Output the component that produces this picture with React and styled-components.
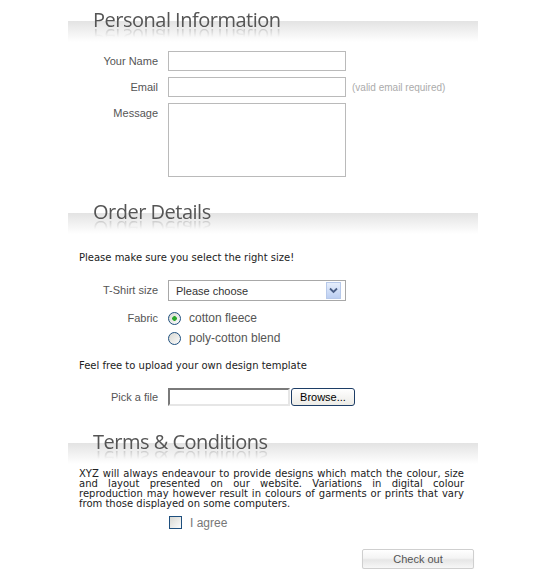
import styled, { createGlobalStyle } from "styled-components"

const GlobalStyle = createGlobalStyle`
    body {
        margin: 0;
        background: #fff;
        font-family: "Liberation Sans", Arial, sans-serif;
    }
`

export default function App() {
    return (
        <>
            <GlobalStyle />
            <Page>
                <SectionHeader>
                    <Title>Personal Information</Title>
                </SectionHeader>

                <FormRow $top={9}>
                    <Label>Your Name</Label>
                    <TextInput type="text" />
                </FormRow>
                <FormRow $top={6}>
                    <Label>Email</Label>
                    <Field>
                        <TextInput type="text" />
                        <Hint>(valid email required)</Hint>
                    </Field>
                </FormRow>
                <FormRow $top={6}>
                    <Label>Message</Label>
                    <TextArea />
                </FormRow>

                <SectionHeader $top={15}>
                    <Title>Order Details</Title>
                </SectionHeader>

                <Note $top={18}>Please make sure you select the right size!</Note>

                <FormRow $top={16}>
                    <Label $height={21}>T-Shirt size</Label>
                    <SelectWrap>
                        <Select defaultValue="">
                            <option value="">Please choose</option>
                            <option value="s">Small</option>
                            <option value="m">Medium</option>
                            <option value="l">Large</option>
                        </Select>
                        <SelectArrow>
                            <svg width="9" height="7" viewBox="0 0 9 7">
                                <path d="M1 1.5 L4.5 5 L8 1.5" fill="none" stroke="#4a5f86" strokeWidth="1.8" />
                            </svg>
                        </SelectArrow>
                    </SelectWrap>
                </FormRow>

                <FormRow $top={7}>
                    <Label>Fabric</Label>
                    <Options>
                        <Option>
                            <Radio type="radio" name="fabric" defaultChecked />
                            cotton fleece
                        </Option>
                        <Option>
                            <Radio type="radio" name="fabric" />
                            poly-cotton blend
                        </Option>
                    </Options>
                </FormRow>

                <Note $top={12}>Feel free to upload your own design template</Note>

                <FormRow $top={16}>
                    <Label $height={18}>Pick a file</Label>
                    <Field $gap={1}>
                        <FileBox type="text" readOnly />
                        <BrowseButton type="button">Browse...</BrowseButton>
                    </Field>
                </FormRow>

                <SectionHeader $top={16}>
                    <Title>Terms &amp; Conditions</Title>
                </SectionHeader>

                <Terms>
                    XYZ will always endeavour to provide designs which match the colour, size
                    and layout presented on our website. Variations in digital colour
                    reproduction may however result in colours of garments or prints that vary
                    from those displayed on some computers.
                </Terms>

                <FormRow $top={7}>
                    <span />
                    <Option $height={13}>
                        <Checkbox type="checkbox" />
                        <AgreeText>I agree</AgreeText>
                    </Option>
                </FormRow>

                <Actions>
                    <CheckoutButton type="button">Check out</CheckoutButton>
                </Actions>
            </Page>
        </>
    )
}

const Page = styled.div`
    width: 410px;
    margin-left: 68px;
`

const SectionHeader = styled.div`
    box-sizing: border-box;
    height: 42px;
    margin-top: ${props => props.$top || 0}px;
    padding: 8px 0 0 25px;
    background: linear-gradient(to bottom, transparent 21px, #e3e3e3 21px, #fff 42px);
`

const Title = styled.h2`
    display: inline-block;
    margin: 0;
    font-family: "Open Sans", sans-serif;
    font-size: 20px;
    font-weight: 400;
    line-height: 24px;
    letter-spacing: -0.5px;
    color: #555;
    -webkit-box-reflect: below -8px linear-gradient(to bottom, transparent 45%, rgba(0, 0, 0, 0.35));
`

const FormRow = styled.div`
    display: grid;
    grid-template-columns: 90px 1fr;
    column-gap: 10px;
    margin-top: ${props => props.$top || 0}px;
`

const Label = styled.label`
    font-size: 11px;
    line-height: ${props => props.$height || 20}px;
    text-align: right;
    color: #555;
`

const Field = styled.div`
    display: flex;
    align-items: center;
    gap: ${props => props.$gap ?? 6}px;
`

const TextInput = styled.input`
    box-sizing: border-box;
    width: 178px;
    height: 20px;
    margin: 0;
    padding: 2px 4px;
    border: 1px solid #bababa;
    font-size: 11px;
    font-family: inherit;
    outline: none;
`

const TextArea = styled.textarea`
    box-sizing: border-box;
    display: block;
    width: 178px;
    height: 74px;
    margin: 0;
    padding: 2px 4px;
    border: 1px solid #bababa;
    resize: none;
    font-size: 11px;
    font-family: inherit;
    outline: none;
`

const Hint = styled.span`
    font-size: 10px;
    color: #ababab;
`

const Note = styled.p`
    margin: ${props => props.$top || 0}px 0 0;
    padding-left: 11px;
    font-family: "DejaVu Sans", Verdana, sans-serif;
    font-size: 10px;
    line-height: 12px;
    color: #222;
`

const SelectWrap = styled.div`
    position: relative;
    width: 178px;
    height: 21px;
`

const Select = styled.select`
    box-sizing: border-box;
    width: 100%;
    height: 100%;
    margin: 0;
    padding: 0 0 0 7px;
    border: 1px solid #a8a8a8;
    background: #fff;
    appearance: none;
    font-family: inherit;
    font-size: 11px;
    color: #333;
    outline: none;
`

const SelectArrow = styled.span`
    position: absolute;
    top: 2px;
    right: 5px;
    box-sizing: border-box;
    width: 15px;
    height: 17px;
    display: flex;
    align-items: center;
    justify-content: center;
    border: 1px solid #b7c9ea;
    background: linear-gradient(to bottom, #e6eefc, #bccff2);
    pointer-events: none;
`

const Options = styled.div`
    display: flex;
    flex-direction: column;
`

const Option = styled.label`
    display: flex;
    align-items: center;
    gap: 8px;
    height: ${props => props.$height || 20}px;
    font-size: 12px;
    color: #555;
`

const Radio = styled.input`
    appearance: none;
    box-sizing: border-box;
    width: 13px;
    height: 13px;
    margin: 0;
    border: 1px solid #1e4f7e;
    border-radius: 50%;
    background: linear-gradient(135deg, #d8d8d2, #fbfbfb);

    &:checked {
        background:
            radial-gradient(circle, #2aa72a 0 2px, transparent 2.6px),
            linear-gradient(135deg, #d8d8d2, #fbfbfb);
    }
`

const Checkbox = styled.input`
    appearance: none;
    box-sizing: border-box;
    width: 13px;
    height: 13px;
    margin: 0 0 0 1px;
    border: 1px solid #1e4f7e;
    background: linear-gradient(135deg, #d8d8d2, #fbfbfb);
`

const AgreeText = styled.span`
    color: #777;
`

const FileBox = styled.input`
    box-sizing: border-box;
    width: 122px;
    height: 18px;
    margin: 0;
    border: 2px solid;
    border-color: #7a7a7a #e6e6e6 #e6e6e6 #7a7a7a;
    outline: none;
`

const BrowseButton = styled.button`
    box-sizing: border-box;
    width: 64px;
    height: 18px;
    margin: 0;
    padding: 0;
    border: 1px solid #1d3d66;
    border-radius: 3px;
    background: linear-gradient(to bottom, #fff, #ecebe6);
    font-family: "Liberation Sans", Arial, sans-serif;
    font-size: 11px;
    color: #000;
`

const Terms = styled.p`
    margin: 5px 0 0;
    padding: 0 14px 0 11px;
    font-family: "DejaVu Sans", Verdana, sans-serif;
    font-size: 10px;
    line-height: 10px;
    text-align: justify;
    color: #222;
`

const Actions = styled.div`
    display: flex;
    justify-content: flex-end;
    margin-top: 20px;
    padding-right: 4px;
`

const CheckoutButton = styled.button`
    box-sizing: border-box;
    width: 112px;
    height: 20px;
    margin: 0;
    padding: 0;
    border: 1px solid #cfcfcf;
    border-radius: 2px;
    background: linear-gradient(to bottom, #fff 0%, #f4f4f4 45%, #e6e6e6 55%, #f7f7f7 100%);
    box-shadow: 0 1px 1px rgba(0, 0, 0, 0.08);
    font-family: "Liberation Sans", Arial, sans-serif;
    font-size: 11px;
    color: #555;
`
